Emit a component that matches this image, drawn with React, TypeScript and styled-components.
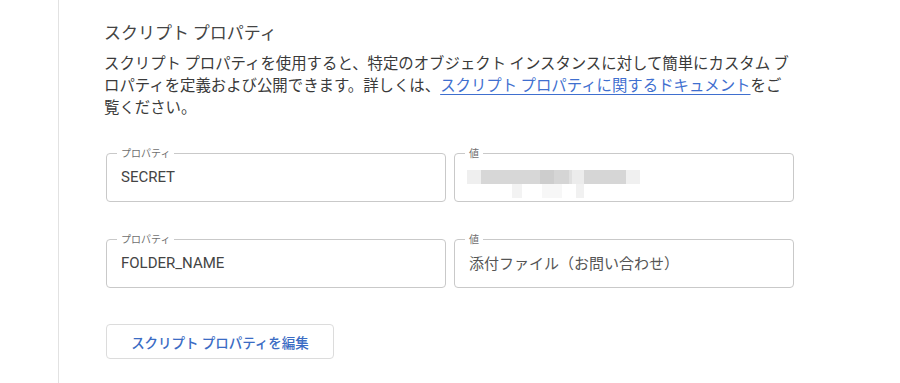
import React from "react";
import styled, { createGlobalStyle } from "styled-components";

const GlobalStyle = createGlobalStyle`
	html, body {
		margin: 0;
		padding: 0;
		background: #fff;
	}
	body {
		font-family: Roboto, "Noto Sans CJK JP", sans-serif;
		color: #3c4043;
	}
`;

const Page = styled.div`
	display: flex;
	height: 383px;
	overflow: hidden;
`;

const Rail = styled.div`
	flex: 0 0 58px;
	border-right: 1px solid #e2e2e2;
`;

const Main = styled.main`
	flex: 1;
	padding: 20px 0 0 45px;
`;

const Title = styled.h2`
	margin: 0;
	font-family: "Noto Sans CJK JP", sans-serif;
	font-size: 17px;
	font-weight: 400;
	line-height: 24px;
	color: #444;
`;

const Description = styled.p`
	margin: 7px 0 0;
	font-family: "Noto Sans CJK JP", sans-serif;
	font-size: 15.4px;
	line-height: 22px;
	color: #3a3a3a;
	white-space: nowrap;
`;

const DocLink = styled.a`
	color: #3f6fcf;
	text-decoration: underline;
	text-underline-offset: 3px;
`;

const FieldGrid = styled.div`
	display: grid;
	grid-template-columns: 340px 340px;
	column-gap: 8px;
	row-gap: 37px;
	margin: 36px 0 0 2px;
`;

const Field = styled.div`
	position: relative;
	box-sizing: border-box;
	height: 49px;
	border: 1px solid #c9c9c9;
	border-radius: 4px;
	display: flex;
	align-items: center;
	padding: 0 14px;
`;

const FieldLabel = styled.span`
	position: absolute;
	top: -8px;
	left: 10px;
	padding: 0 4px;
	background: #fff;
	font-family: "Noto Sans CJK JP", sans-serif;
	font-size: 10px;
	line-height: 14px;
	color: #6f6f6f;
`;

const FieldValue = styled.span<{ $jp?: boolean }>`
	font-family: ${(p) =>
		p.$jp ? `"Noto Sans CJK JP", sans-serif` : `Roboto, "Noto Sans CJK JP", sans-serif`};
	font-size: 15px;
	color: ${(p) => (p.$jp ? "#555" : "#444")};
	margin-top: -2px;
`;

const Redacted = styled.div`
	display: flex;
	flex-direction: column;
	margin: 12px 0 0 -2px;
`;

const BlurRow = styled.div`
	display: flex;
	height: 14px;
`;

const Block = styled.span<{ $w: number; $c: string; $ml?: number }>`
	width: ${(p) => p.$w}px;
	margin-left: ${(p) => p.$ml ?? 0}px;
	background: ${(p) => p.$c};
`;

const EditButton = styled.button`
	margin: 36px 0 0 2px;
	width: 228px;
	height: 35px;
	border: 1px solid #dcdcdc;
	border-radius: 4px;
	background: #fff;
	font-family: "Noto Sans CJK JP", sans-serif;
	font-size: 13.5px;
	font-weight: 500;
	color: #3b6cc4;
	cursor: pointer;
`;

const topBlocks: [number, string][] = [
	[14, "#efefef"],
	[59, "#d7d7d7"],
	[14, "#cdcdcd"],
	[15, "#d5d5d5"],
	[3, "#e0e0e0"],
	[12, "#ececec"],
	[42, "#d6d6d6"],
	[14, "#f0f0f0"],
];

const bottomBlocks: [number, string, number][] = [
	[10, "#f3f3f3", 45],
	[20, "#f7f7f7", 20],
	[8, "#f1f1f1", 14],
];

const Field2 = ({ label, children }: { label: string; children: React.ReactNode }) => (
	<Field>
		<FieldLabel>{label}</FieldLabel>
		{children}
	</Field>
);

export default function App() {
	return (
		<>
			<GlobalStyle />
			<Page>
				<Rail />
				<Main>
					<Title>スクリプト プロパティ</Title>
					<Description>
						スクリプト プロパティを使用すると、特定のオブジェクト インスタンスに対して簡単にカスタム ブ
						<br />
						ロパティを定義および公開できます。詳しくは、
						<DocLink href="#">スクリプト プロパティに関するドキュメント</DocLink>をご
						<br />
						覧ください。
					</Description>
					<FieldGrid>
						<Field2 label="プロパティ">
							<FieldValue>SECRET</FieldValue>
						</Field2>
						<Field2 label="値">
							<Redacted>
								<BlurRow>
									{topBlocks.map(([w, c], i) => (
										<Block key={i} $w={w} $c={c} />
									))}
								</BlurRow>
								<BlurRow>
									{bottomBlocks.map(([w, c, ml], i) => (
										<Block key={i} $w={w} $c={c} $ml={ml} />
									))}
								</BlurRow>
							</Redacted>
						</Field2>
						<Field2 label="プロパティ">
							<FieldValue>FOLDER_NAME</FieldValue>
						</Field2>
						<Field2 label="値">
							<FieldValue $jp>添付ファイル（お問い合わせ）</FieldValue>
						</Field2>
					</FieldGrid>
					<EditButton>スクリプト プロパティを編集</EditButton>
				</Main>
			</Page>
		</>
	);
}
